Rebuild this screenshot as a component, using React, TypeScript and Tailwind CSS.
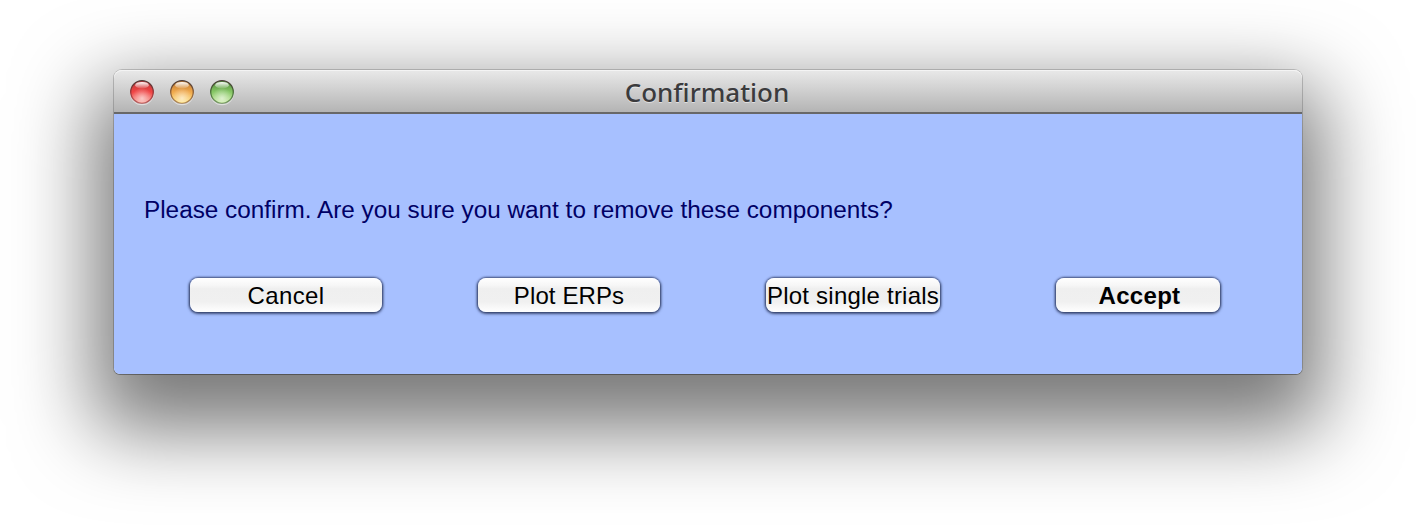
type LightProps = { id: string; top: string; mid: string; bottom: string; rim: string };

function TrafficLight({ id, top, mid, bottom, rim }: LightProps) {
  return (
    <svg width="26" height="28" viewBox="0 0 26 28" aria-hidden="true">
      <defs>
        <linearGradient id={`${id}-body`} x1="0" y1="0" x2="0" y2="1">
          <stop offset="0" stopColor={top} />
          <stop offset="0.5" stopColor={mid} />
          <stop offset="1" stopColor={bottom} />
        </linearGradient>
        <linearGradient id={`${id}-rim`} x1="0" y1="0" x2="0" y2="1">
          <stop offset="0" stopColor="#4a3b38" />
          <stop offset="0.5" stopColor={rim} />
          <stop offset="1" stopColor={rim} stopOpacity="0.6" />
        </linearGradient>
        <linearGradient id={`${id}-shine`} x1="0" y1="0" x2="0" y2="1">
          <stop offset="0" stopColor="#fff" stopOpacity="1" />
          <stop offset="1" stopColor="#fff" stopOpacity="0.1" />
        </linearGradient>
        <radialGradient id={`${id}-glow`} cx="0.5" cy="0.8" r="0.5">
          <stop offset="0" stopColor="#fff" stopOpacity="0.6" />
          <stop offset="1" stopColor="#fff" stopOpacity="0" />
        </radialGradient>
      </defs>
      <circle cx="13" cy="15.2" r="12" fill="#fff" opacity="0.5" />
      <circle cx="13" cy="14" r="11.3" fill={`url(#${id}-body)`} stroke={`url(#${id}-rim)`} strokeWidth="1.3" />
      <circle cx="13" cy="14" r="10.5" fill={`url(#${id}-glow)`} />
      <ellipse cx="13" cy="7.2" rx="6.8" ry="3.3" fill={`url(#${id}-shine)`} />
    </svg>
  );
}

const buttonClass =
  "flex h-[34px] items-center justify-center whitespace-nowrap rounded-[8px] bg-[linear-gradient(to_bottom,#ffffff_0%,#f6f6f6_22%,#efefef_32%,#f0f0f0_70%,#ffffff_100%)] pt-px text-[24px] leading-none text-black shadow-[0_0_2px_1px_rgba(30,40,80,0.55),0_1px_3px_1px_rgba(20,30,60,0.6)]";

export default function App() {
  return (
    <main className="h-[532px] w-[1416px] overflow-hidden bg-white pl-[114px] pt-[70px] font-['Liberation_Sans',Arial,sans-serif]">
      <section className="h-[304px] w-[1188px] rounded-[8px] rounded-b-[6px] shadow-[0_0_0_1px_rgba(0,0,0,0.18),0_1px_0_0_rgba(0,0,0,0.2),0_36px_80px_20px_rgba(0,0,0,0.53)]">
        <header className="grid h-[44px] grid-cols-[1fr_auto_1fr] items-center rounded-t-[8px] border-b-2 border-[#686868] bg-[linear-gradient(to_bottom,#e9e9e9,#b4b4b4)] shadow-[inset_0_1px_0_#f4f4f4]">
          <div className="flex gap-[14px] pl-[15px] pt-[2px]">
            <TrafficLight id="close" top="#bd3538" mid="#f04545" bottom="#f79b91" rim="#983336" />
            <TrafficLight id="minimize" top="#bd7630" mid="#f0a94c" bottom="#ffe27b" rim="#895c35" />
            <TrafficLight id="zoom" top="#508b3a" mid="#86c765" bottom="#c5e99d" rim="#476e37" />
          </div>
          <h1 className="-ml-[2px] pt-px font-['Noto_Sans',sans-serif] text-[26px] font-medium leading-none text-[#3b3b3d] [text-shadow:0_1px_0_rgba(255,255,255,0.5)]">
            Confirmation
          </h1>
        </header>
        <div className="h-[260px] rounded-b-[6px] bg-[#a7c0ff] pl-[30px] pt-[83px]">
          <p className="text-[24.32px] leading-[26px] text-[#000066]">
            Please confirm. Are you sure you want to remove these components?
          </p>
          <div className="flex pl-[46px] pt-[55px]">
            <button className={`${buttonClass} mr-[96px] w-[192px] tracking-[0.4px]`}>Cancel</button>
            <button className={`${buttonClass} mr-[106px] w-[182px] tracking-[0.1px]`}>Plot ERPs</button>
            <button className={`${buttonClass} mr-[116px] w-[174px] tracking-[0.22px]`}>Plot single trials</button>
            <button className={`${buttonClass} w-[164px] pl-[3px] font-bold tracking-[0.3px]`}>Accept</button>
          </div>
        </div>
      </section>
    </main>
  );
}
